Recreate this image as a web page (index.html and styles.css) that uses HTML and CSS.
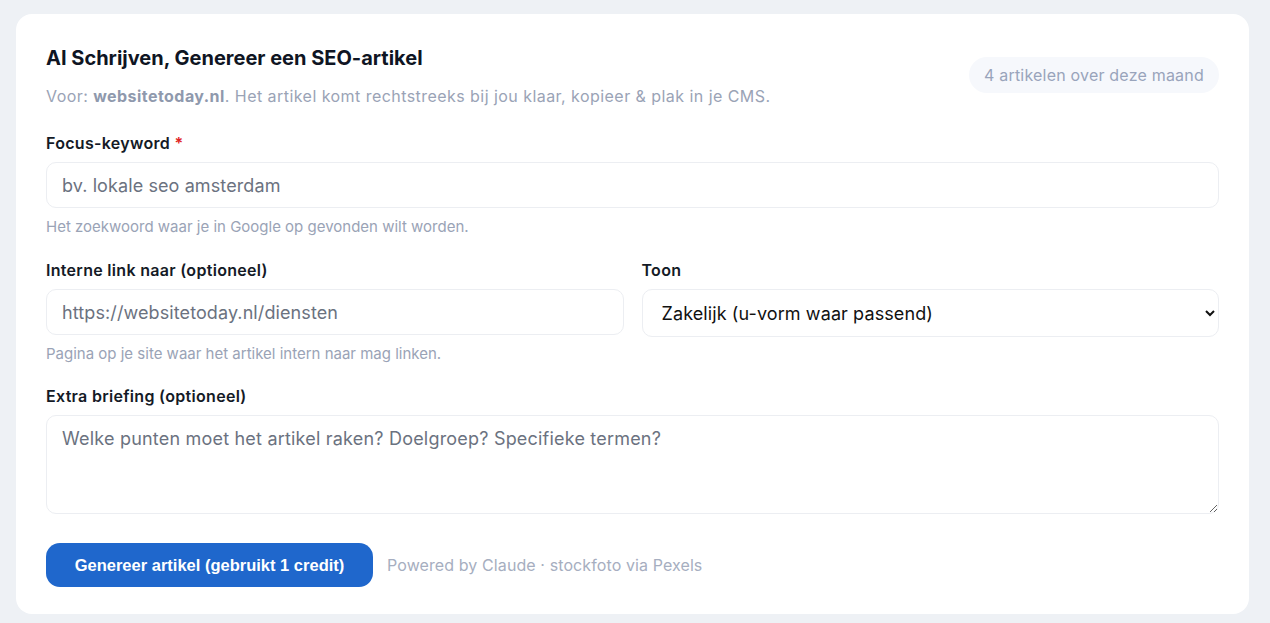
FILE: index.html
```html
<!DOCTYPE html>
<html lang="nl">
  <head>
    <meta charset="UTF-8" />
    <meta name="viewport" content="width=device-width, initial-scale=1.0" />
    <title>AI Schrijven</title>
    <link rel="stylesheet" href="styles.css">
  </head>
  <body>
    <div class="card">
      <!-- Kop -->
      <div class="card-head">
        <div>
          <h1 class="title">AI Schrijven, Genereer een SEO-artikel</h1>
          <p class="subtitle">
            Voor: <b>websitetoday.nl</b>. Het artikel komt rechtstreeks bij jou klaar, kopieer &amp; plak in je CMS.
          </p>
        </div>
        <span class="badge">4 artikelen over deze maand</span>
      </div>

      <div class="field">
        <label class="label" for="keyword">Focus-keyword <span class="req">*</span></label>
        <input class="input" id="keyword" type="text" placeholder="bv. lokale seo amsterdam" />
        <p class="hint">Het zoekwoord waar je in Google op gevonden wilt worden.</p>
      </div>

      <div class="row">
        <div class="field">
          <label class="label" for="link">Interne link naar (optioneel)</label>
          <input class="input" id="link" type="text" placeholder="https://websitetoday.nl/diensten" />
          <p class="hint">Pagina op je site waar het artikel intern naar mag linken.</p>
        </div>
        <div class="field">
          <label class="label" for="toon">Toon</label>
          <select class="input select" id="toon">
            <option>Zakelijk (u-vorm waar passend)</option>
            <option>Informeel (je-vorm)</option>
          </select>
        </div>
      </div>

      <div class="field">
        <label class="label" for="briefing">Extra briefing (optioneel)</label>
        <textarea class="input textarea" id="briefing" placeholder="Welke punten moet het artikel raken? Doelgroep? Specifieke termen?"></textarea>
      </div>

      <div class="actions">
        <button class="btn">Genereer artikel (gebruikt 1 credit)</button>
        <span class="powered">Powered by Claude · stockfoto via Pexels</span>
      </div>
    </div>
  </body>
</html>
```

FILE: styles.css
```css
body {
  margin: 0;
  padding: 14px 20px 9px 16px;
  background: #eef1f5;
  font-family: "Inter", "Lato", sans-serif;
  color: #111827;
}

.card {
  background: #fff;
  border-radius: 16px;
  padding: 30px 30px 27px 30px;
  box-sizing: border-box;
  width: 1233px;
}

.card-head {
  display: flex;
  justify-content: space-between;
  align-items: center;
  margin-bottom: 24px;
}

.title {
  margin: 0;
  font-size: 20px;
  line-height: 28px;
  font-weight: 700;
  color: #0f1523;
}

.subtitle {
  margin: 12px 0 0;
  font-size: 16px;
  line-height: 24px;
  letter-spacing: 0.45px;
  color: #9aa3b6;
}

.subtitle b {
  color: #8f99ad;
  font-weight: 700;
}

.badge {
  background: #f6f8fc;
  color: #99a4bb;
  font-size: 16px;
  letter-spacing: 0.2px;
  line-height: 36px;
  border-radius: 18px;
  margin-top: -2px;
  width: 250px;
  box-sizing: border-box;
  text-align: center;
}

.field {
  display: flex;
  flex-direction: column;
}

.label {
  font-size: 16px;
  line-height: 22px;
  font-weight: 600;
  letter-spacing: 0.3px;
  color: #141a26;
  margin-bottom: 8px;
}

.req {
  color: #e02424;
}

.input {
  height: 46px;
  box-sizing: border-box;
  border: 1px solid #eceef2;
  border-radius: 10px;
  padding: 0 15px;
  font-family: inherit;
  font-size: 18px;
  letter-spacing: 0.1px;
  color: #1b2230;
  background: #fff;
  outline: none;
}

.input::placeholder {
  color: #6b7280;
}

.select {
  height: 48px;
  color: #111;
}

.textarea {
  height: 99px;
  padding: 12px 15px;
  letter-spacing: 0.2px;
  resize: vertical;
}

.hint {
  margin: 9px 0 0;
  font-size: 15px;
  line-height: 20px;
  color: #9aa3b6;
}

.row {
  display: grid;
  grid-template-columns: 1fr 1fr;
  gap: 18px;
  margin: 22px 0 21px;
}

.actions {
  display: flex;
  align-items: center;
  gap: 14px;
  margin-top: 29px;
}

.btn {
  background: #1f67cc;
  color: #fff;
  border: none;
  border-radius: 14px;
  height: 44px;
  width: 327px;
  font-family: "Liberation Sans", Arial, sans-serif;
  font-weight: 700;
  font-size: 16.5px;
  cursor: pointer;
}

.powered {
  font-size: 16px;
  letter-spacing: 0.1px;
  color: #a6aec0;
}
```
